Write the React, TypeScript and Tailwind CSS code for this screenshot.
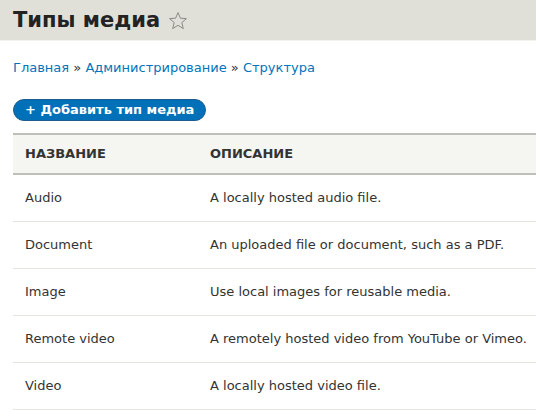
import React from "react";

const rows = [
  ["Audio", "A locally hosted audio file."],
  ["Document", "An uploaded file or document, such as a PDF."],
  ["Image", "Use local images for reusable media."],
  ["Remote video", "A remotely hosted video from YouTube or Vimeo."],
  ["Video", "A locally hosted video file."],
];

export default function App() {
  return (
    <div className="w-[536px] h-[410px] overflow-hidden bg-white text-[#333] font-['DejaVu_Sans',sans-serif]">
      <div className="h-[41px] bg-[#e0e0d8] flex items-center pl-[13px] border-b border-[#f3f3f0]">
        <h1 className="text-[21px] font-bold text-[#232323] leading-none">Типы медиа</h1>
        <svg className="ml-[8px] mt-[1px]" width="20" height="20" viewBox="0 0 20 20">
          <path
            d="M10 1.6 L12.4 7.2 L18.4 7.6 L13.8 11.6 L15.3 17.6 L10 14.3 L4.7 17.6 L6.2 11.6 L1.6 7.6 L7.6 7.2 Z"
            fill="none"
            stroke="#8a8a86"
            strokeWidth="1"
            strokeLinejoin="round"
          />
        </svg>
      </div>
      <div className="pl-[13px]">
        <div className="mt-[19px] text-[13px] leading-[16px] text-[#0074bd]">
          Главная <span className="text-[#333]">»</span> Администрирование <span className="text-[#333]">»</span> Структура
        </div>
        <div className="mt-[21px]">
          <span className="inline-flex items-center h-[22px] px-[11px] rounded-full bg-[#0071b8] border border-[#1e5c90] text-white text-[13px] font-bold leading-none">
            + Добавить тип медиа
          </span>
        </div>
        <table className="mt-[12px] w-[540px] border-collapse text-[13px] text-left">
          <thead>
            <tr className="bg-[#f5f5f2] border-t-2 border-[#bfbfba] border-b-2">
              <th className="h-[40px] pl-[12px] w-[197px] font-bold uppercase text-[#333]">Название</th>
              <th className="h-[40px] font-bold uppercase text-[#333]">Описание</th>
            </tr>
          </thead>
          <tbody>
            {rows.map(([n, d]) => (
              <tr key={n} className="border-b border-[#e6e4df]">
                <td className="h-[47px] pl-[12px] text-[#333]">{n}</td>
                <td className="h-[47px] text-[#333]">{d}</td>
              </tr>
            ))}
          </tbody>
        </table>
      </div>
    </div>
  );
}
